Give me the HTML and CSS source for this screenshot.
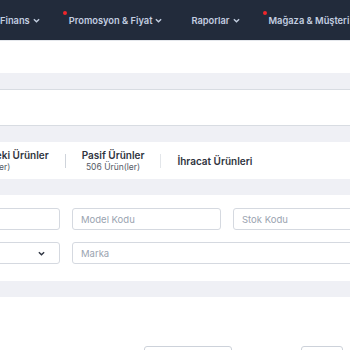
FILE: index.html
```html
<!DOCTYPE html>
<html lang="tr">
  <head>
    <meta charset="UTF-8" />
    <meta name="viewport" content="width=device-width, initial-scale=1.0" />
    <title>Ürün Listesi</title>
    <link rel="stylesheet" href="styles.css">
  </head>
  <body>
    <header class="topnav">
      <nav class="menu">
        <a class="menu-item" href="#">Finans
          <svg class="chev" viewBox="0 0 8 5"><polyline points="1,1 4,4 7,1" /></svg>
        </a>
        <a class="menu-item has-dot" href="#">Promosyon &amp; Fiyat
          <svg class="chev" viewBox="0 0 8 5"><polyline points="1,1 4,4 7,1" /></svg>
        </a>
        <a class="menu-item" href="#">Raporlar
          <svg class="chev" viewBox="0 0 8 5"><polyline points="1,1 4,4 7,1" /></svg>
        </a>
        <a class="menu-item has-dot" href="#">Mağaza &amp; Müşteri
          <svg class="chev" viewBox="0 0 8 5"><polyline points="1,1 4,4 7,1" /></svg>
        </a>
      </nav>
    </header>

    <main class="page">
      <div class="gap-top"></div>
      <div class="band band-line-bottom"></div>
      <div class="blank"></div>
      <div class="band band-line-top"></div>

      <div class="tabs">
        <div class="tab tab-first">
          <span class="tab-title">Onay Sürecindeki Ürünler</span>
          <span class="tab-sub">12 Ürün(ler)</span>
        </div>
        <span class="tab-sep"></span>
        <div class="tab">
          <span class="tab-title">Pasif Ürünler</span>
          <span class="tab-sub">506 Ürün(ler)</span>
        </div>
        <span class="tab-sep tab-sep-light"></span>
        <div class="tab">
          <span class="tab-title">İhracat Ürünleri</span>
        </div>
      </div>

      <div class="band"></div>

      <form class="filters">
        <input type="text" placeholder="Ürün Adı" />
        <input type="text" placeholder="Model Kodu" />
        <input type="text" placeholder="Stok Kodu" />
        <div class="select">
          <span>Kategori</span>
          <svg class="select-chev" viewBox="0 0 8 5"><polyline points="1,1 4,4 7,1" /></svg>
        </div>
        <input class="wide" type="text" placeholder="Marka" />
      </form>

      <div class="band"></div>

      <div class="toolbar">
        <button class="btn btn-export" type="button">Excel'e Aktar</button>
        <button class="btn btn-small" type="button">Filtre</button>
      </div>
    </main>
  </body>
</html>
```

FILE: styles.css
```css
body {
  margin: 0;
  font-family: Inter, "Noto Sans", sans-serif;
  overflow: hidden;
  background: #fff;
  width: 350px;
}
.topnav {
  height: 40px;
  background-color: #222b3b;
  border-bottom: 1px solid #e4e7ec;
}
.menu {
  display: flex;
  align-items: center;
  height: 40px;
  gap: 29px;
  white-space: nowrap;
}
.menu-item {
  position: relative;
  display: flex;
  align-items: center;
  gap: 3px;
  color: #c3cee0;
  font-size: 9.3px;
  font-weight: 600;
  text-decoration: none;
}
.has-dot::before {
  content: "";
  position: absolute;
  left: -6px;
  top: -4px;
  width: 4px;
  height: 4px;
  border-radius: 50%;
  background: #f0262b;
}
.chev {
  width: 7px;
  height: 5px;
  fill: none;
  stroke: #c3cee0;
  stroke-width: 1.6;
}
.gap-top {
  height: 32px;
}
.band {
  height: 16px;
  background-color: #eff0f5;
}
.band-line-bottom {
  border-bottom: 1px solid #d8dce2;
}
.band-line-top {
  border-top: 1px solid #d8dce2;
}
.blank {
  height: 35px;
}
.tabs {
  display: flex;
  align-items: center;
  height: 37px;
  margin-left: -91px;
  white-space: nowrap;
}
.tab {
  display: flex;
  flex-direction: column;
  align-items: center;
  padding: 0 16px;
}
.tab-title {
  font-size: 10px;
  font-weight: 600;
  color: #2f3440;
}
.tab-sub {
  font-size: 8.5px;
  color: #555b66;
  margin-top: 1px;
}
.tab-sep {
  width: 1px;
  height: 14px;
  background: #cfd4db;
}
.tab-sep-light {
  background: #e3e6ea;
}
.filters {
  display: grid;
  grid-template-columns: repeat(3, 149px);
  grid-auto-rows: 22px;
  gap: 12px;
  margin: 0 0 0 -89px;
  padding: 13px 0 17px;
}
.filters input,
.select {
  box-sizing: border-box;
  height: 22px;
  border: 1px solid #d5d9e0;
  border-radius: 3px;
  padding: 0 8px;
  font-family: inherit;
  font-size: 9.5px;
  color: #333;
}
.filters input::placeholder {
  color: #9aa3b0;
}
.filters .wide {
  grid-column: span 2;
}
.select {
  display: flex;
  align-items: center;
  justify-content: space-between;
  padding-right: 14px;
  color: #9aa3b0;
}
.select-chev {
  width: 7px;
  height: 5px;
  fill: none;
  stroke: #2d3340;
  stroke-width: 1.6;
}
.toolbar {
  display: flex;
  padding-top: 49px;
}
.btn {
  height: 28px;
  background: #fff;
  border: 1px solid #cdd2da;
  border-radius: 3px;
  font-family: inherit;
  font-size: 10px;
  color: #333;
}
.btn-export {
  width: 88px;
  margin-left: 144px;
}
.btn-small {
  width: 42px;
  margin-left: 69px;
}
```
